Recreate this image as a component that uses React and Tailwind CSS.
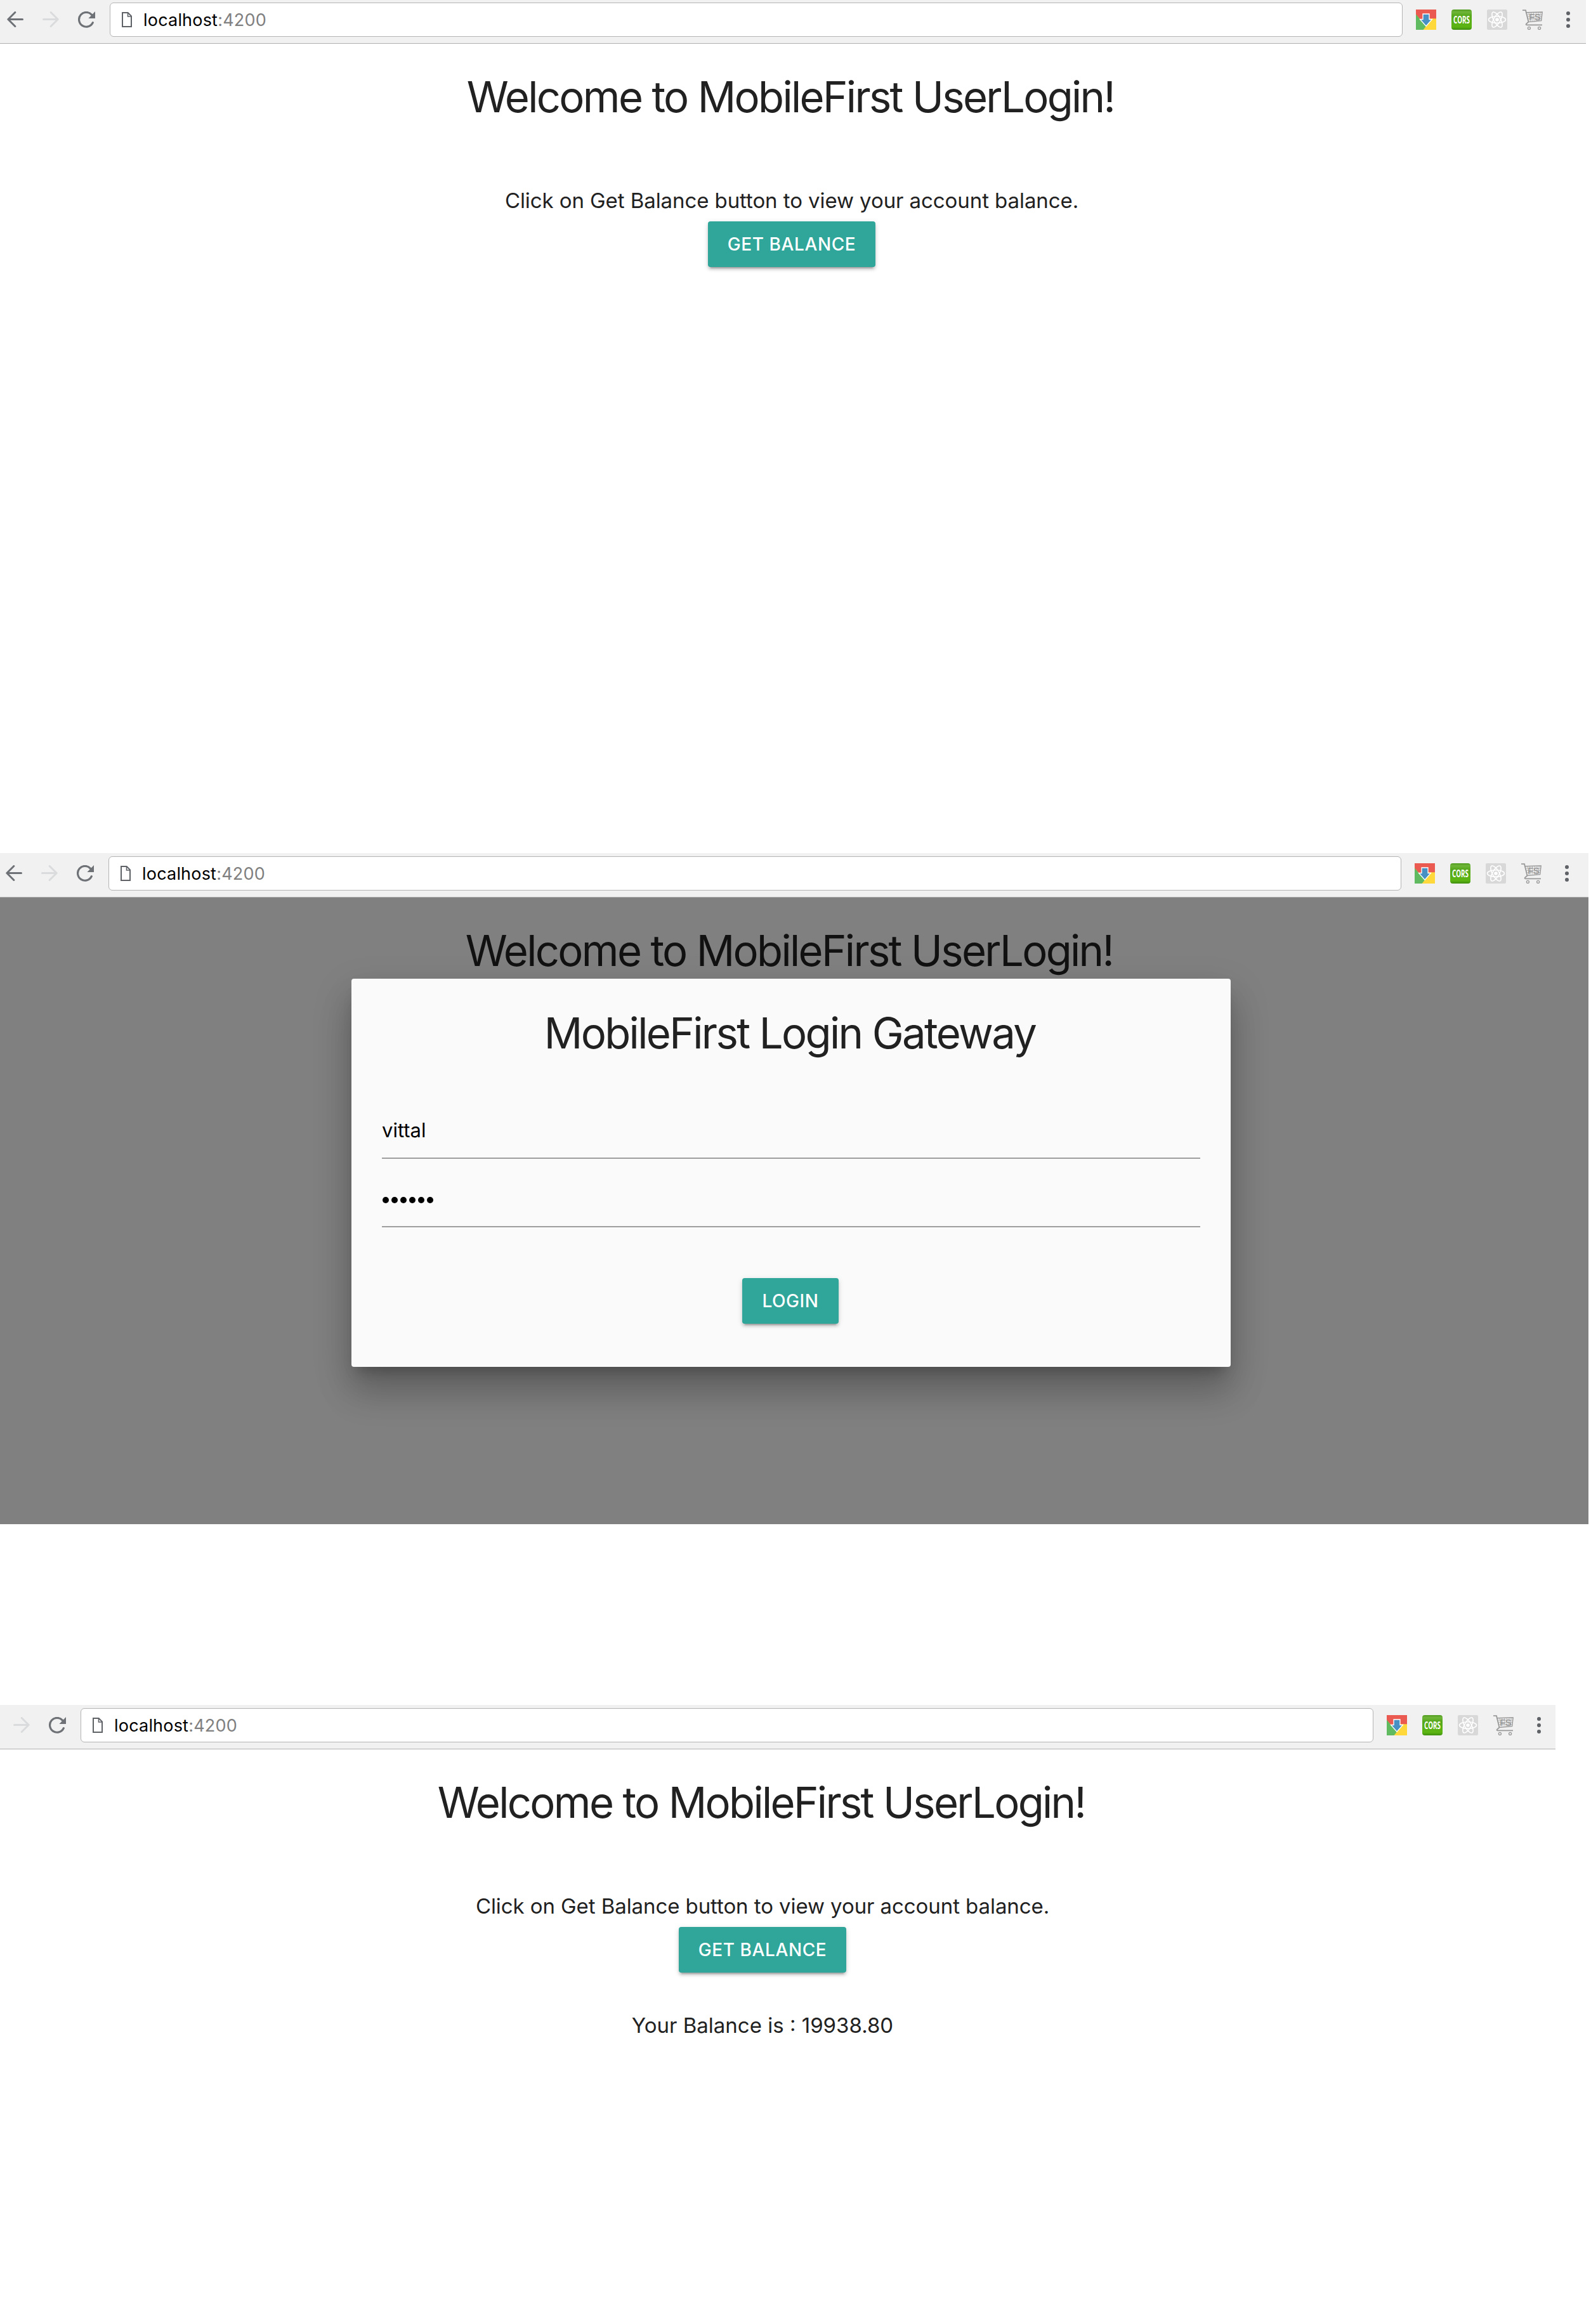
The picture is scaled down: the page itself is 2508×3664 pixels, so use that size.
function BackArrow() {
  return (
    <svg className="h-[26px] w-[26px]" viewBox="0 0 26 26" fill="none" stroke="#6e7276" strokeWidth="3" strokeLinecap="round" strokeLinejoin="round">
      <path d="M24.5 12.5H2M12.8 1.5L1.8 12.5L12.8 23.5" />
    </svg>
  );
}

function ForwardArrow() {
  return (
    <svg className="h-[26px] w-[26px]" viewBox="0 0 26 26" fill="none" stroke="#d9dbdc" strokeWidth="3" strokeLinecap="round" strokeLinejoin="round">
      <path d="M1.5 12.5H24M13.2 1.5L24.2 12.5L13.2 23.5" />
    </svg>
  );
}

function Reload() {
  return (
    <svg className="h-[26px] w-[27px]" viewBox="0 0 27 26" fill="none">
      <path d="M23.3 17.6A11.4 11.4 0 1 1 21.6 5.4" stroke="#6e7276" strokeWidth="3.2" strokeLinecap="round" />
      <path d="M27 0V11H16.4Z" fill="#6e7276" />
    </svg>
  );
}

function PageIcon() {
  return (
    <svg className="h-[24px] w-[16px]" viewBox="0 0 16 24" fill="none" stroke="#5f6368" strokeWidth="2">
      <path d="M1 1H9.6L15 6.4V23H1Z" />
      <path d="M9.5 1V7H15" strokeWidth="1.6" />
    </svg>
  );
}

function DownloadExt() {
  return (
    <svg className="h-[32px] w-[32px]" viewBox="0 0 32 32">
      <rect width="32" height="32" fill="#ffd93b" />
      <path d="M0 0H32V14.3H16V26L0 8Z" fill="#eb5a50" />
      <path d="M0 7.5L16 26.5L11.5 32H0Z" fill="#60bb60" />
      <path d="M11 7H21V15.5H25.5L16 26.2L6.5 15.5H11Z" fill="#4690c3" stroke="#fff" strokeWidth="1.3" />
    </svg>
  );
}

function CorsExt() {
  return (
    <svg className="h-[32px] w-[32px] overflow-visible" viewBox="0 0 32 32">
      <defs>
        <linearGradient id="cors" x1="0" y1="0" x2="0" y2="1">
          <stop offset="0" stopColor="#4f9a1e" />
          <stop offset="0.12" stopColor="#6fb53a" />
          <stop offset="0.3" stopColor="#57a81c" />
          <stop offset="0.85" stopColor="#5cb512" />
          <stop offset="1" stopColor="#3f8f10" />
        </linearGradient>
      </defs>
      <rect width="32" height="32" rx="4" fill="url(#cors)" />
      <text x="16" y="21.6" textAnchor="middle" textLength="26" lengthAdjust="spacingAndGlyphs" fill="#fff" className="font-['Open_Sans',sans-serif] text-[16px] font-bold">
        CORS
      </text>
    </svg>
  );
}

function ReactExt() {
  return (
    <svg className="h-[32px] w-[32px]" viewBox="0 0 32 32" fill="none" stroke="#fff" strokeWidth="1.6">
      <rect width="32" height="32" rx="2" fill="#d8d8d8" stroke="none" />
      <ellipse cx="16" cy="16" rx="13.5" ry="5.2" />
      <ellipse cx="16" cy="16" rx="13.5" ry="5.2" transform="rotate(60 16 16)" />
      <ellipse cx="16" cy="16" rx="13.5" ry="5.2" transform="rotate(120 16 16)" />
      <circle cx="16" cy="16" r="2.8" fill="#fff" stroke="none" />
    </svg>
  );
}

function CartExt() {
  return (
    <svg className="h-[32px] w-[32px]" viewBox="0 0 32 32" fill="none" stroke="#999" strokeWidth="1.4">
      <path d="M0 1.2H5L9.5 19.5L6 22.5Q4.8 24.4 7 24.4H31" strokeWidth="1.8" />
      <path d="M5.8 4.8L31.2 4L29.6 17.6L9 19.6" />
      <path d="M7.5 8H31M8 11.3H30.5M8.8 14.6H30M10 4.8L12.4 19M13.5 4.8L15.4 19M17.5 4.5L18.4 18.7M21.4 4.5V18.4M25 4.4L24.2 18M28.3 4.3L27 17.8" strokeWidth="0.6" />
      <text x="10.4" y="17" fill="#8f8f8f" stroke="none" className="font-['Liberation_Sans',sans-serif] text-[14px]">
        FS
      </text>
      <circle cx="10.4" cy="29.4" r="2" />
      <circle cx="26.6" cy="29.4" r="2" />
    </svg>
  );
}

function MenuDots() {
  return (
    <div className="flex w-[6px] flex-col gap-1">
      <span className="h-[6px] w-[6px] rounded-full bg-[#5f6368]" />
      <span className="h-[6px] w-[6px] rounded-full bg-[#5f6368]" />
      <span className="h-[6px] w-[6px] rounded-full bg-[#5f6368]" />
    </div>
  );
}

/* Browser toolbar; `shift` slides it left so that its first controls may be cut off. */
function Toolbar({ shift = '', size }) {
  return (
    <div className={'overflow-hidden border-b border-[#b1b1b1] bg-[#f1f1f1] ' + size}>
      <div className={'flex h-full w-[2500px] items-end pb-[10px] pl-[11px] ' + shift}>
        <div className="mb-[14px] flex shrink-0 gap-[30px]">
          <BackArrow />
          <ForwardArrow />
          <Reload />
        </div>
        <div className="ml-[23px] flex h-[54px] w-[2038px] shrink-0 items-center rounded-[6px] border border-[#b4b4b4] bg-white pl-[18px]">
          <PageIcon />
          <div className="ml-[18px] pt-[2px] text-[27px] leading-[32px] tracking-[0.2px] text-black">
            localhost<span className="text-[#808080]">:4200</span>
          </div>
        </div>
        <div className="mb-[11px] ml-[21px] flex shrink-0 items-center gap-[24px]">
          <DownloadExt />
          <CorsExt />
          <ReactExt />
          <CartExt />
        </div>
        <div className="mb-[14px] ml-[37px] shrink-0">
          <MenuDots />
        </div>
      </div>
    </div>
  );
}

function Heading({ className = '', children }) {
  return <h1 className={'h-[76px] pr-[4px] text-center text-[67px] leading-[76px] whitespace-nowrap ' + className}>{children}</h1>;
}

function Button({ className = '', children }) {
  return (
    <button
      className={
        'flex h-[72px] items-center justify-center rounded-[4px] bg-[#2fa699] text-[28px] leading-[32px] font-medium tracking-[0.6px] text-white shadow-[0_4px_4px_0_rgba(0,0,0,0.14),0_2px_10px_0_rgba(0,0,0,0.12),0_6px_2px_-4px_rgba(0,0,0,0.2)] ' +
        className
      }
    >
      {children}
    </button>
  );
}

function BalancePage({ width, balance }) {
  return (
    <div className={'flex flex-col items-center text-[33px] leading-[50px] text-[#212121] ' + width}>
      <Heading className="mt-[46px] tracking-[-2.67px]">Welcome to MobileFirst UserLogin!</Heading>
      <p className="mt-[100px] tracking-[-0.08px]">Click on Get Balance button to view your account balance.</p>
      <Button className="mt-[8px] w-[264px]">GET BALANCE</Button>
      {balance && <p className="mt-[58px]">Your Balance is : {balance}</p>}
    </div>
  );
}

function LoginModal() {
  return (
    <div className="absolute top-[198px] left-[554px] h-[612px] w-[1386px] rounded-[4px] bg-[#fafafa] px-[48px] pt-[48px] shadow-[0_42px_56px_0_rgba(0,0,0,0.16),0_24px_60px_6px_rgba(0,0,0,0.14),0_16px_20px_-10px_rgba(0,0,0,0.22)]">
      <Heading className="tracking-[-2.62px] text-[#212121]">MobileFirst Login Gateway</Heading>
      <div className="mt-[46px] flex h-[114px] items-center border-b-2 border-[#9e9e9e] pt-[25px] text-[31px] leading-[40px] text-black">vittal</div>
      <div className="flex h-[108px] items-center gap-1 border-b-2 border-[#9e9e9e] pt-[24px] pl-px">
        {[0, 1, 2, 3, 4, 5].map((i) => (
          <span key={i} className="h-[10px] w-[10px] rounded-full bg-black" />
        ))}
      </div>
      <Button className="mt-[80px] ml-[568px] w-[152px]">LOGIN</Button>
    </div>
  );
}

export default function App() {
  return (
    <div className="flex h-[3664px] w-[2508px] flex-col overflow-hidden bg-white font-['Inter',sans-serif]">
      <section className="h-[1345px] shrink-0">
        <Toolbar size="h-[69px] w-[2500px]" />
        <BalancePage width="w-[2496px]" />
      </section>

      <section className="relative h-[1343px] shrink-0">
        <Toolbar shift="-ml-[2px]" size="h-[70px] w-[2504px]" />
        <div className="h-[988px] w-[2504px] overflow-hidden bg-[#808080] text-[#111]">
          <div className="flex w-[2492px] justify-center">
            <Heading className="mt-[46px] tracking-[-2.67px]">Welcome to MobileFirst UserLogin!</Heading>
          </div>
        </div>
        <LoginModal />
      </section>

      <section className="shrink-0">
        <Toolbar shift="-ml-[46px]" size="h-[70px] w-[2452px]" />
        <BalancePage width="w-[2404px]" balance="19938.80" />
      </section>
    </div>
  );
}
